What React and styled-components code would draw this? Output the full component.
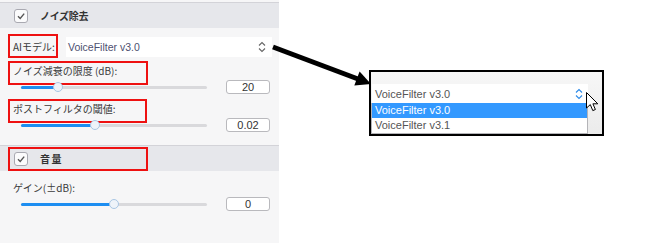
import styled, { createGlobalStyle } from "styled-components";

const GlobalStyle = createGlobalStyle`
  html, body {
    margin: 0;
    padding: 0;
    background: #fff;
  }
  body {
    font-family: "Liberation Sans", "Noto Sans CJK JP", sans-serif;
  }
`;

function Slider({ value, min, max }) {
  const pct = ((value - min) / (max - min)) * 100;
  return (
    <Track>
      <Fill style={{ width: `${pct}%` }} />
      <Thumb style={{ left: `${pct}%` }} />
    </Track>
  );
}

function Field({ label, mark, value, min, max, shown, mt }) {
  return (
    <FieldBox $mt={mt}>
      <Label $box={mark}>{label}</Label>
      <SliderRow>
        <Slider value={value} min={min} max={max} />
        <NumberBox>{shown}</NumberBox>
      </SliderRow>
    </FieldBox>
  );
}

function CheckIcon() {
  return (
    <svg width="10" height="10" viewBox="0 0 10 10">
      <polyline points="2,5.2 4.2,7.4 8.2,2.6" fill="none" stroke="#555" strokeWidth="1.4" />
    </svg>
  );
}

function UpDown({ color }) {
  return (
    <svg width="8" height="12" viewBox="0 0 8 12">
      <path d="M1 4.5 L4 1.5 L7 4.5 M1 7.5 L4 10.5 L7 7.5" fill="none" stroke={color} strokeWidth="1.1" />
    </svg>
  );
}

export default function App() {
  return (
    <>
      <GlobalStyle />
      <Page>
        <Panel>
          <SectionHeader>
            <CheckBox><CheckIcon /></CheckBox>
            <SectionTitle>ノイズ除去</SectionTitle>
          </SectionHeader>
          <SectionBody $pt={9} $pb={13}>
            <ModelRow>
              <Label $box={50} $tall>AIモデル:</Label>
              <Select>
                <span>VoiceFilter v3.0</span>
                <UpDown color="#666" />
              </Select>
            </ModelRow>
            <Field label="ノイズ減衰の限度 (dB):" mark={140} value={20} min={0} max={100} shown="20" mt={7} />
            <Field label="ポストフィルタの閾値:" mark={139} value={0.02} min={0} max={0.05} shown="0.02" mt={8} />
          </SectionBody>
          <SectionHeader $marked>
            <CheckBox><CheckIcon /></CheckBox>
            <SectionTitle $wide>音量</SectionTitle>
          </SectionHeader>
          <SectionBody $pt={0} $pb={0}>
            <Field label="ゲイン(±dB):" value={0} min={-20} max={20} shown="0" mt={10} />
          </SectionBody>
        </Panel>
        <Stage>
          <Callout>
            <PopupSelect>
              <span>VoiceFilter v3.0</span>
              <UpDown color="#2b8ae8" />
            </PopupSelect>
            <OptionList>
              <Option $active>VoiceFilter v3.0</Option>
              <Option>VoiceFilter v3.1</Option>
            </OptionList>
            <Cursor width="13" height="20" viewBox="0 0 13 20">
              <path d="M0.5 0.5 L0.5 16 L4.3 12.6 L6.8 18.6 L9.4 17.5 L6.9 11.8 L11.8 11.8 Z" fill="#fff" stroke="#000" strokeWidth="1" />
            </Cursor>
          </Callout>
        </Stage>
        <ArrowLayer width="660" height="243" viewBox="0 0 660 243">
          <line x1="273" y1="47" x2="358" y2="79" stroke="#000" strokeWidth="5" />
          <polygon points="371,84 354.3,85.6 359.6,71.6" fill="#000" />
        </ArrowLayer>
      </Page>
    </>
  );
}

const Page = styled.div`
  position: relative;
  width: 660px;
  height: 243px;
  display: flex;
  overflow: hidden;
  background: #fff;
`;

const Panel = styled.div`
  width: 279px;
  padding-top: 2px;
  background: #f6f6f7;
  display: flex;
  flex-direction: column;
`;

const SectionHeader = styled.div`
  position: relative;
  height: 25px;
  border-top: 1px solid #d3d3d8;
  background: #e6e7eb;
  display: flex;
  align-items: center;
  padding-left: 14px;
  gap: 12px;
  ${(p) =>
    p.$marked &&
    `
    &::after {
      content: "";
      position: absolute;
      left: 8px;
      top: 1px;
      width: 140px;
      height: 24px;
      border: 2px solid #ee1111;
      box-sizing: border-box;
    }
  `}
`;

const CheckBox = styled.div`
  width: 14px;
  height: 14px;
  box-sizing: border-box;
  border: 1px solid #a9a9b1;
  border-radius: 3px;
  background: #fbfbfc;
  display: flex;
  align-items: center;
  justify-content: center;
`;

const SectionTitle = styled.span`
  font-family: "Noto Sans CJK JP", sans-serif;
  font-size: 10px;
  font-weight: 700;
  color: #333;
  letter-spacing: ${(p) => (p.$wide ? "1.5px" : "-0.3px")};
`;

const SectionBody = styled.div`
  display: flex;
  flex-direction: column;
  padding: ${(p) => p.$pt}px 7px ${(p) => p.$pb}px 12px;
`;

const ModelRow = styled.div`
  display: flex;
  align-items: center;
  height: 20px;
`;

const Label = styled.div`
  position: relative;
  font-family: "Noto Sans CJK JP", sans-serif;
  font-size: 10px;
  color: #3a3a3a;
  padding-left: 1px;
  height: ${(p) => (p.$tall ? 20 : 14)}px;
  line-height: ${(p) => (p.$tall ? 20 : 14)}px;
  white-space: nowrap;
  ${(p) =>
    p.$box &&
    `
    &::after {
      content: "";
      position: absolute;
      left: -4px;
      top: -3px;
      width: ${p.$box}px;
      height: 24px;
      border: 2px solid #ee1111;
      box-sizing: border-box;
    }
  `}
`;

const Select = styled.div`
  margin-left: auto;
  width: 206px;
  height: 20px;
  box-sizing: border-box;
  background: #fff;
  display: flex;
  align-items: center;
  justify-content: space-between;
  padding: 0 6px 0 2px;
  font-size: 10.5px;
  color: #4d5070;
`;

const FieldBox = styled.div`
  display: flex;
  flex-direction: column;
  margin-top: ${(p) => p.$mt}px;
`;

const SliderRow = styled.div`
  display: flex;
  align-items: center;
  height: 14px;
  margin-top: 2px;
  padding-left: 9px;
  gap: 19px;
`;

const Track = styled.div`
  position: relative;
  width: 186px;
  height: 3px;
  border-radius: 2px;
  background: #d9d9dc;
`;

const Fill = styled.div`
  height: 100%;
  border-radius: 2px;
  background: #1d8ef1;
`;

const Thumb = styled.div`
  position: absolute;
  top: 50%;
  width: 10px;
  height: 10px;
  border-radius: 50%;
  box-sizing: border-box;
  background: #eef3f9;
  border: 1px solid #a8c6e4;
  transform: translate(-50%, -50%);
`;

const NumberBox = styled.div`
  width: 44px;
  height: 14px;
  box-sizing: border-box;
  border: 1px solid #b9b9bd;
  border-radius: 3px;
  background: #fff;
  font-size: 11px;
  line-height: 12px;
  text-align: center;
  color: #333;
`;

const Stage = styled.div`
  flex: 1;
  background: #fff;
`;

const Callout = styled.div`
  position: relative;
  margin: 70px 0 0 90px;
  width: 235px;
  height: 66px;
  box-sizing: border-box;
  border: 2px solid #000;
  padding-top: 12px;
  background: linear-gradient(180deg, #f7f7f7, #ebebeb);
`;

const PopupSelect = styled.div`
  margin-left: 1px;
  width: 216px;
  height: 19px;
  box-sizing: border-box;
  background: #fff;
  display: flex;
  align-items: center;
  justify-content: space-between;
  padding: 0 5px 0 3px;
  font-size: 11px;
  color: #555;
`;

const OptionList = styled.div`
  width: 217px;
  box-sizing: border-box;
  border: 1px solid #b4b4b8;
  border-top: none;
  background: #fff;
`;

const Option = styled.div`
  height: 15px;
  line-height: 15px;
  padding-left: 3px;
  font-size: 11px;
  background: ${(p) => (p.$active ? "#3399ff" : "#fff")};
  color: ${(p) => (p.$active ? "#fff" : "#555")};
`;

const Cursor = styled.svg`
  position: absolute;
  left: 215px;
  top: 20px;
`;

const ArrowLayer = styled.svg`
  position: absolute;
  left: 0;
  top: 0;
  pointer-events: none;
`;
